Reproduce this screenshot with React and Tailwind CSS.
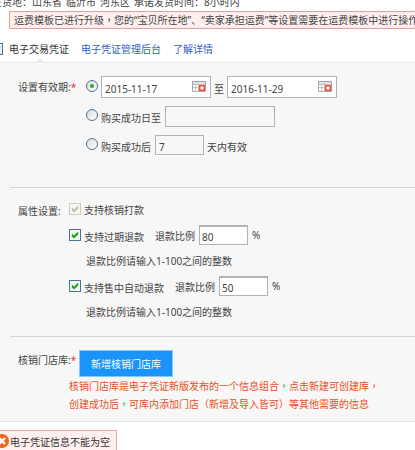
import React from 'react';

const Tick = ({ className }) => (
  <svg viewBox="0 0 12 12" className={`pointer-events-none col-start-1 row-start-1 h-3 w-3 ${className}`}>
    <path d="M2.8 4.6 5 6.6 9.2 2.6v3L5 9.6 2.8 7.6z" fill="currentColor" />
  </svg>
);

const Checkbox = ({ id, disabled, label }) => (
  <span className="grid h-3 w-3 shrink-0">
    <input
      id={id}
      type="checkbox"
      defaultChecked
      disabled={disabled}
      aria-label={label}
      className="col-start-1 row-start-1 h-3 w-3 appearance-none border border-[#4a7396] bg-[#f4f6f4] disabled:border-[#cfcbbd] disabled:bg-[#f7f7f4]"
    />
    <Tick className={disabled ? 'text-[#c2bfae]' : 'text-[#21a121]'} />
  </span>
);

const Radio = ({ id, label, defaultChecked }) => (
  <span className="grid h-3 w-3 shrink-0 place-items-center">
    <input
      id={id}
      type="radio"
      name="validity"
      defaultChecked={defaultChecked}
      aria-label={label}
      className="peer col-start-1 row-start-1 h-3 w-3 appearance-none rounded-full border border-[#4f7599] bg-linear-to-br from-[#dcdcd8] to-white"
    />
    <span className="pointer-events-none col-start-1 row-start-1 hidden h-1 w-1 rounded-full bg-[#2aae2a] peer-checked:block" />
  </span>
);

// Comma centred in its cell
const Comma = () => <span className="font-['Noto_Sans_CJK_TC',sans-serif]">，</span>;

const CalendarIcon = () => (
  <svg viewBox="0 0 14 12" className="h-3 w-3.5">
    <path d="M.5.5h13v10H.5z" fill="#fff" stroke="#a5a5a5" />
    <path d="M1 1h12v2H1z" fill="#e2e2e2" />
    <path d="M1 3.5h12M1 6.5h12M3.5 3v8M6.5 3v8" stroke="#c4c4c4" />
    <path d="M7.75 4.75h4.5v4.5h-4.5z" fill="#fff" stroke="#e8552f" strokeWidth="1.5" />
  </svg>
);

const DateField = ({ label, value }) => (
  <span className="flex h-[22px] w-[110px] items-center border border-[#b3b3b3] bg-white pr-1">
    <input aria-label={label} defaultValue={value} className="w-full min-w-0 pt-1 pl-[3px] leading-4 outline-none" />
    <button type="button" aria-label="选择日期" className="shrink-0">
      <CalendarIcon />
    </button>
  </span>
);

const RefundRow = ({ id, label, value }) => (
  <div>
    <div className="flex h-5 items-center">
      <Checkbox id={id} />
      <label htmlFor={id} className="ml-[3px] pt-[3px]">{label}</label>
      <label htmlFor={`${id}-rate`} className="ml-[11px] pt-px">退款比例</label>
      <input
        id={`${id}-rate`}
        defaultValue={value}
        className="mx-1 h-5 w-[49px] border border-t-2 border-[#b3b3b3] bg-white pt-0.5 pl-0.5 outline-none"
      />
      <span>%</span>
    </div>
    <p className="mt-2 pl-[17px]">退款比例请输入1-100之间的整数</p>
  </div>
);

const App = () => {
  return (
    <main className="overflow-hidden bg-white font-['Noto_Sans','Noto_Sans_CJK_SC',sans-serif] text-[10px] leading-4 text-[#444]">
      {/* Shipping summary */}
      <div className="-mt-1.5 -ml-2 flex gap-1 whitespace-nowrap">
        <span>发货地：山东省</span>
        <span>临沂市</span>
        <span>河东区</span>
        <span>承诺发货时间：8小时内</span>
      </div>
      <div className="mt-px ml-[9px] flex h-[18px] items-center border border-r-0 border-[#eb9c9c] bg-[#fff0f0] pl-1 whitespace-nowrap">
        <span>
          运费模板已进行升级<Comma />您的“宝贝所在地”、“卖家承担运费”等设置需要在运费模板中进行操作
        </span>
      </div>

      {/* Voucher header */}
      <div className="relative -ml-[9px] flex h-[34px] items-center border-b border-[#e9ebee] pt-1.5">
        <Checkbox id="voucher" />
        <label htmlFor="voucher" className="ml-1.5 text-[#333]">电子交易凭证</label>
        <a href="#manage" className="ml-3 text-[#2c61c9]">电子凭证管理后台</a>
        <a href="#details" className="ml-3 text-[#2c61c9]">了解详情</a>
        <svg viewBox="0 0 10 5" className="absolute -bottom-px left-11 h-[5px] w-2.5">
          <path d="M0 5 5 0l5 5z" fill="#ececee" />
        </svg>
      </div>

      <section className="border-b border-[#e6e6e6] bg-[#f7f7f7] pt-[13px] pb-2">
        {/* Validity period */}
        <fieldset className="flex pl-[18px]">
          <div className="w-[68px] shrink-0 pt-[3px]">
            设置有效期:<span className="text-[#e33]">*</span>
          </div>
          <div className="flex flex-col gap-2">
            <div className="flex h-[22px] items-center">
              <span className="pb-[3px]">
                <Radio id="range" label="日期范围" defaultChecked />
              </span>
              <span className="ml-[3px] flex items-center">
                <DateField label="开始日期" value="2015-11-17" />
                <span className="mx-[3px] pt-[3px]">至</span>
                <DateField label="结束日期" value="2016-11-29" />
              </span>
            </div>
            <div className="flex h-[21px] items-center">
              <span className="pb-[3px]">
                <Radio id="until" />
              </span>
              <label htmlFor="until" className="ml-[3px] pt-[3px]">购买成功日至</label>
              <input aria-label="截止日期" className="ml-1 h-[21px] w-[110px] border border-[#b3b3b3] bg-[#f7f7f7] outline-none" />
            </div>
            <div className="flex h-5 items-center">
              <span className="pb-[3px]">
                <Radio id="after" />
              </span>
              <label htmlFor="after" className="ml-[3px] pt-[3px]">购买成功后</label>
              <input
                aria-label="有效天数"
                defaultValue="7"
                className="mr-[3px] ml-1 h-5 w-[49px] border border-[#b3b3b3] bg-[#f7f7f7] pt-1 pl-[3px] outline-none"
              />
              <span className="pt-[3px]">天内有效</span>
            </div>
          </div>
        </fieldset>

        <hr className="mt-8 ml-2.5 border-[#d2d2d2]" />

        {/* Attributes */}
        <fieldset className="flex pt-[15px] pl-[18px]">
          <div className="w-[51px] shrink-0">属性设置:</div>
          <div>
            <div className="flex h-3 items-center">
              <Checkbox id="redeem" disabled />
              <label htmlFor="redeem" className="ml-[3px] pt-0.5">支持核销打款</label>
            </div>
            <div className="flex flex-col gap-[7px] pt-2.5">
              <RefundRow id="expired" label="支持过期退款" value="80" />
              <RefundRow id="selling" label="支持售中自动退款" value="50" />
            </div>
          </div>
        </fieldset>

        <hr className="mt-4 ml-2.5 border-[#d2d2d2]" />

        {/* Stores */}
        <div className="pt-[13px] pl-[18px]">
          <div className="flex items-start">
            <div className="w-[61px] shrink-0 pt-0.5">
              核销门店库:<span className="text-[#e33]">*</span>
            </div>
            <button type="button" className="h-[27px] border border-[#8fc6f5] bg-[#1a94fb] px-[11px] text-white">
              新增核销门店库
            </button>
          </div>
          <p className="pl-[51px] leading-[18px] whitespace-nowrap text-[#e8501f]">
            核销门店库是电子凭证新版发布的一个信息组合<Comma />点击新建可创建库<Comma />
            <br />
            创建成功后<Comma />可库内添加门店（新增及导入皆可）等其他需要的信息
          </p>
        </div>
      </section>

      {/* Error message */}
      <div role="alert" className="mt-2 -ml-1.5 flex h-5 w-fit items-center border border-b-0 border-[#eea9a9] bg-[#fff0f0] pr-1.5 whitespace-nowrap text-[#333]">
        <svg viewBox="0 0 14 14" className="mr-px h-3.5 w-3.5">
          <circle cx="7" cy="7" r="7" fill="#f0641e" />
          <path d="m4 4 6 6M10 4l-6 6" stroke="#fff" strokeWidth="2.4" />
        </svg>
        <span className="pt-0.5">电子凭证信息不能为空</span>
      </div>
    </main>
  );
};

export default App;
